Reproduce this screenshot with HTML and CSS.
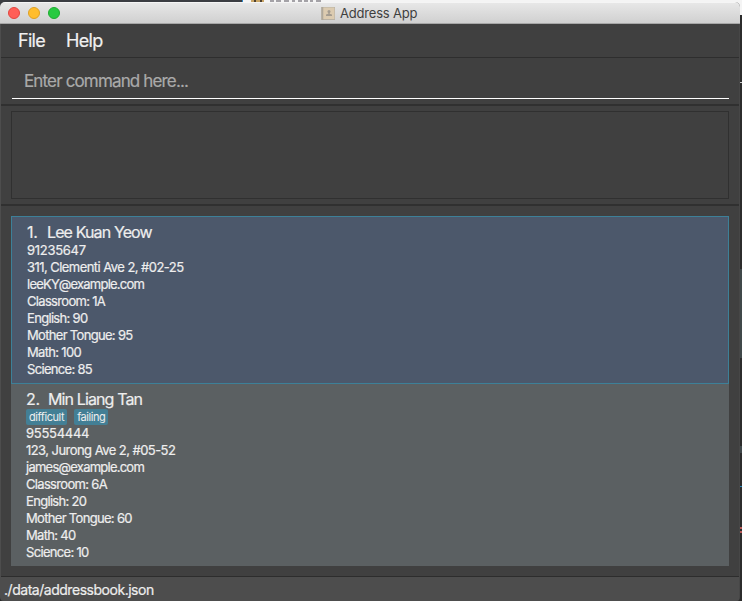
FILE: index.html
```html
<!DOCTYPE html>
<html lang="en">
<head>
<meta charset="utf-8">
<title>Address App</title>
<link rel="stylesheet" href="styles.css">
</head>
<body>
<div class="desktop">
  <div class="behind-top">
    <svg width="100" height="2" viewBox="0 0 100 2"><path d="M8 0h13v2H8z" fill="#c9a566"/><path d="M11 0h2v2h-2zM17 0h2v2h-2z" fill="#4c4030"/><path d="M27 1h4M33 1h5M41 1h5M49 1h3M55 1h4M61 1h4M67 1h3M73 1h5" stroke="#54505a" stroke-width="1"/></svg>
  </div>
  <div class="behind-right">
    <i class="edge-light"></i><i class="edge-card"></i><i class="edge-card low"></i><i class="edge-blue"></i><i class="edge-red"></i><i class="edge-red second"></i>
  </div>
  <main class="window">
    <header class="titlebar">
      <div class="lights"><span class="light red"></span><span class="light yellow"></span><span class="light green"></span></div>
      <svg class="book" width="14" height="13" viewBox="0 0 14 13"><path d="M0 0h14v13H0z" fill="#b9b2a5"/><path d="M2 0.6h11.4v11.4H2z" fill="#dccbb0"/><path d="M1.8 0v13" stroke="#a69e92" stroke-width=".7"/><circle cx="8" cy="4.5" r="1.5" fill="#a49c90"/><path d="M7.3 5h1.4v1.8l2.3 .8v1.4H5V7.600l2.300-.8z" fill="#a49c90"/></svg>
      <span class="title">Address App</span>
    </header>
    <nav class="menu"><span class="file">File</span><span class="help">Help</span></nav>
    <section class="command"><div class="field"><span class="prompt">Enter command here...</span></div></section>
    <section class="result"><div class="result-box"></div></section>
    <section class="people">
      <article class="card selected">
        <h2><span class="num">1.</span><span class="name">Lee Kuan Yeow</span></h2>
        <p class="digits">91235647</p>
        <p class="address">311, Clementi Ave 2, #02-25</p>
        <p class="email">leeKY@example.com</p>
        <p>Classroom: 1A</p>
        <p>English: 90</p>
        <p>Mother Tongue: 95</p>
        <p>Math: 100</p>
        <p>Science: 85</p>
      </article>
      <article class="card">
        <h2><span class="num">2.</span><span class="name">Min Liang Tan</span></h2>
        <div class="tags"><span class="tag">difficult</span><span class="tag">failing</span></div>
        <p class="digits">95554444</p>
        <p class="address">123, Jurong Ave 2, #05-52</p>
        <p class="email">james@example.com</p>
        <p>Classroom: 6A</p>
        <p>English: 20</p>
        <p>Mother Tongue: 60</p>
        <p>Math: 40</p>
        <p>Science: 10</p>
      </article>
    </section>
    <footer class="status"><span class="path">./data/addressbook.json</span></footer>
  </main>
</div>
</body>
</html>
```
FILE: styles.css
```css
* { box-sizing: border-box; }
body { margin: 0; font-family: Inter, "Liberation Sans", sans-serif; }
.desktop { position: relative; width: 742px; height: 601px; overflow: hidden; background: #2c2c2c; }
.behind-top { position: absolute; left: 0; top: 0; width: 742px; height: 15px; background: linear-gradient(90deg, #3b3d42 242px, #2b87c8 242px, #2b87c8 243px, #f4f4f4 243px); }
.behind-top svg { display: block; margin-left: 243px; }
.behind-right { position: absolute; left: 740px; top: 15px; width: 2px; height: 586px; background: #2c2c2c; }
.behind-right i { position: absolute; left: 0; width: 2px; height: 1px; }
.edge-light { top: 67px; background: #ccc; }
.behind-right .edge-card { top: 254px; height: 89px; background: #40484a; }
.behind-right .low { top: 431px; height: 7px; }
.edge-blue { top: 471px; background: #2784b8; }
.behind-right .edge-red { top: 512px; height: 2px; background: #b85a58; }
.behind-right .second { top: 516px; }
.window { position: relative; margin-top: 2px; width: 740px; height: 599px; display: flex; flex-direction: column; padding: 0 1px; background: linear-gradient(90deg, #4d4d4d 1px, #404040 1px, #404040 739px, #474747 739px); border-radius: 5px 5px 4px 4px; overflow: hidden; }
.titlebar { flex: none; height: 22px; background: linear-gradient(#e7e7e7, #d0d0d0); border-bottom: 1px solid #a7a7a7; border-top: 1px solid #f5f5f5; margin: 0 -1px; display: flex; align-items: center; }
.lights { display: flex; gap: 8px; padding-left: 8px; width: 321px; }
.light { width: 12px; height: 12px; border-radius: 50%; border: 1px solid; }
.red { background: #ff5f57; border-color: #e2463f; }
.yellow { background: #ffbd2e; border-color: #dfa023; }
.green { background: #28ca41; border-color: #1eac2f; }
.book { flex: none; }
.title { margin-left: 5px; font-size: 13px; line-height: 18px; color: #3f3f3f; letter-spacing: -.2px; white-space: nowrap; }
.menu { flex: none; height: 34px; border-bottom: 1px solid #2e2e2e; display: flex; align-items: center; padding-left: 17px; gap: 21px; color: #f0f0f0; font-size: 18px; letter-spacing: -.7px; -webkit-text-stroke: .2px; }
.command { flex: none; height: 48px; border-bottom: 2px solid #303030; padding: 5px 10px 0 11px; }
.field { height: 36px; border-bottom: 1px solid #fff; padding-left: 12px; display: flex; align-items: center; color: #aaa; font-size: 17px; letter-spacing: -.85px; -webkit-text-stroke: .2px; }
.result { flex: none; height: 100px; border-bottom: 2px solid #303030; padding: 5px 10px 6px; }
.result-box { height: 88px; border: 1px solid #303030; }
.people { flex: 1; padding: 10px 10px 0; }
.card { background: #5b6062; padding: 6px 0 5px 15px; height: 182px; color: #eee; -webkit-text-stroke: .2px; }
.card.selected { background: #4c586b; border: 1px solid #3d8098; height: 168px; padding-top: 6px; }
h2 { margin: 0; height: 19px; line-height: 19px; font-size: 16px; font-weight: 400; letter-spacing: -.88px; display: flex; }
.num { width: 20px; letter-spacing: -.3px; }
.card:not(.selected) .num { width: 22px; }
p { margin: 0; height: 17px; line-height: 17px; font-size: 13px; letter-spacing: -.68px; white-space: nowrap; }
.digits { letter-spacing: -.28px; }
.address { letter-spacing: -.55px; }
.email { letter-spacing: -.76px; }
.tags { height: 16px; display: flex; gap: 7px; }
.tag { height: 16px; line-height: 16px; padding: 0 3px; border-radius: 2px; background: #437f95; font-size: 11px; letter-spacing: -.43px; -webkit-text-stroke: 0; }
.status { flex: none; height: 25px; border-top: 1px solid #2d2d2d; background: #4d4d4d; display: flex; align-items: center; padding-left: 3px; color: #eee; font-size: 14px; letter-spacing: -.47px; -webkit-text-stroke: .2px; }
```
